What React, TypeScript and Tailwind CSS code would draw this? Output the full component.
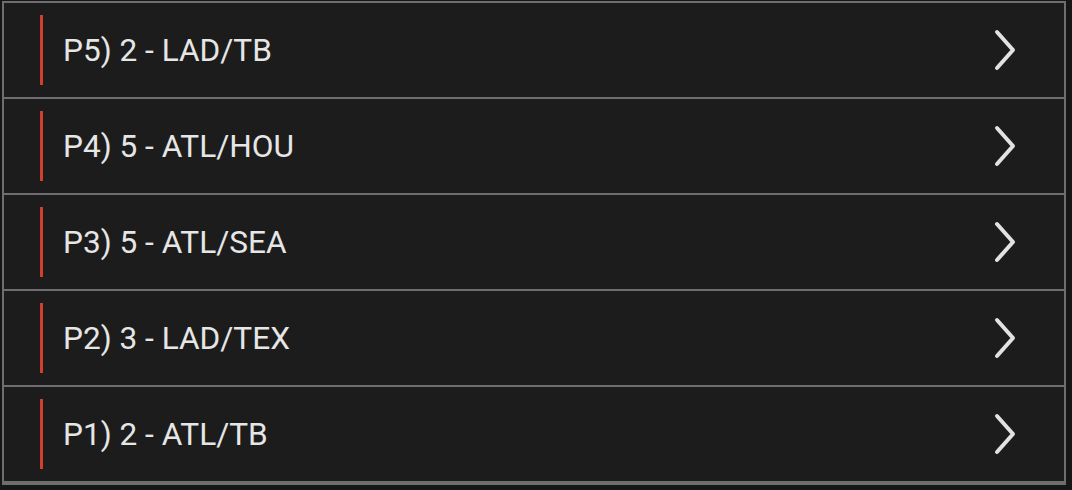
import React from 'react';

const picks = ['P5) 2 - LAD/TB', 'P4) 5 - ATL/HOU', 'P3) 5 - ATL/SEA', 'P2) 3 - LAD/TEX', 'P1) 2 - ATL/TB'];

const Chevron = () => (
  <svg width="24" height="42" viewBox="0 0 24 42" fill="none">
    <polyline
      points="4,3 20,21 4,39"
      stroke="#e2e2e2"
      strokeWidth="4"
      strokeLinecap="round"
      strokeLinejoin="round"
    />
  </svg>
);

const App = () => {
  return (
    <div className="w-[1072px] h-[490px] bg-[#161616] pt-[1px] pl-[2px]" style={{ fontFamily: 'Roboto, "Noto Sans", sans-serif' }}>
      <div className="w-[1064px] bg-[#1c1c1c] border-2 border-[#6e6e6e]">
        {picks.map(pick => (
          <div
            key={pick}
            className="h-[96px] flex items-center border-b-2 border-[#6e6e6e] pl-[36px] pr-[47px]"
          >
            <div className="w-[3px] h-[70px] bg-[#d23f2e]" />
            <span className="ml-[20px] pt-[2px] text-[31.6px] text-[#e6e6e6]">{pick}</span>
            <div className="ml-auto">
              <Chevron />
            </div>
          </div>
        ))}
      </div>
    </div>
  );
}

export default App;
